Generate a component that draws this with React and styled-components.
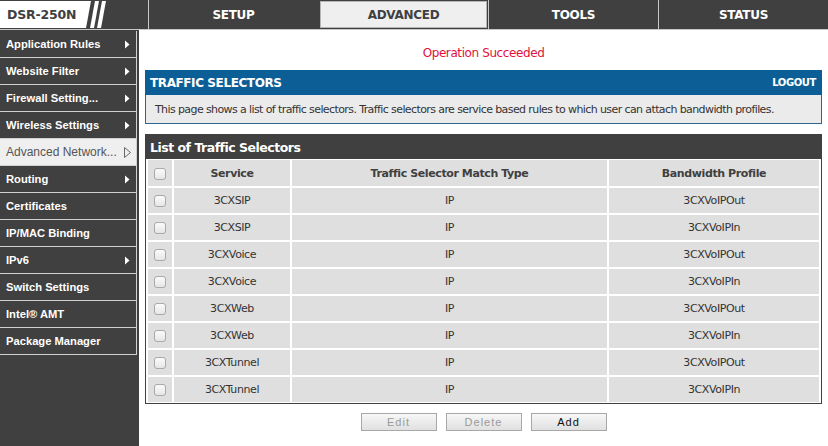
import React from "react";
import styled, { createGlobalStyle } from "styled-components";

const Global = createGlobalStyle`
  html, body { margin: 0; padding: 0; background: #fff; }
  body { font-family: "DejaVu Sans", Tahoma, sans-serif; }
  * { box-sizing: border-box; }
`;

const Page = styled.div`
  width: 828px;
  height: 446px;
  display: flex;
  flex-direction: column;
  overflow: hidden;
`;

const TopBar = styled.div`
  height: 30px;
  background: #404040;
  border-bottom: 1px solid #c8c8c8;
  display: flex;
  flex-shrink: 0;
`;

const Logo = styled.div`
  width: 148px;
  position: relative;
  display: flex;
  align-items: center;
`;

const LogoShape = styled.svg`
  position: absolute;
  left: 0;
  top: 0;
`;

const LogoText = styled.span`
  position: relative;
  padding-left: 7px;
  font-family: "DejaVu Sans", Tahoma, sans-serif;
  font-weight: bold;
  font-size: 12.5px;
  letter-spacing: -0.2px;
  color: #404040;
`;

const Nav = styled.div`
  flex: 1;
  display: grid;
  grid-template-columns: repeat(4, 1fr);
`;

const Tab = styled.div`
  border-left: 1px solid #c8c8c8;
  display: flex;
  align-items: center;
  justify-content: center;
  font-family: "DejaVu Sans", Tahoma, sans-serif;
  font-weight: bold;
  font-size: 12px;
  letter-spacing: -0.3px;
  color: ${(p) => (p.$active ? "#404040" : "#fff")};
  background: ${(p) => (p.$active ? "#efefef" : "transparent")};
  box-shadow: ${(p) => (p.$active ? "inset 0 0 0 1px #b5b5b5" : "none")};
  ${(p) => p.$active && "border: 1px solid #404040; border-left: 2px solid #404040;"}
`;

const Body = styled.div`
  flex: 1;
  display: flex;
  min-height: 0;
`;

const Sidebar = styled.div`
  width: 139px;
  background: #404040;
  padding-top: 1px;
  flex-shrink: 0;
`;

const MenuItem = styled.div`
  width: 137px;
  height: 27px;
  border-right: 1px solid #d0d0d0;
  border-bottom: 1px solid #d0d0d0;
  display: flex;
  align-items: center;
  justify-content: space-between;
  padding: 0 5px 0 6px;
  font-family: "Liberation Sans", Arial, sans-serif;
  font-size: ${(p) => (p.$active ? "12px" : "11.2px")};
  font-weight: ${(p) => (p.$active ? "normal" : "bold")};
  color: ${(p) => (p.$active ? "#555" : "#fff")};
  background: ${(p) => (p.$active ? "#efefef" : "#404040")};
  white-space: nowrap;
`;

const Arrow = styled.svg`
  flex-shrink: 0;
`;

const Main = styled.div`
  flex: 1;
  padding: 0 6px 0 6px;
  display: flex;
  flex-direction: column;
`;

const Message = styled.div`
  height: 40px;
  display: flex;
  align-items: center;
  justify-content: center;
  padding-top: 6px;
  color: #e0103a;
  font-size: 12px;
  letter-spacing: -0.4px;
`;

const BlueHeader = styled.div`
  height: 25px;
  background: #0c5f96;
  display: flex;
  align-items: center;
  justify-content: space-between;
  padding: 0 6px 0 5px;
  color: #fff;
  font-weight: bold;
`;

const HeaderTitle = styled.span`
  font-size: 12px;
  letter-spacing: -0.4px;
`;

const Logout = styled.span`
  font-size: 10px;
  letter-spacing: -0.4px;
`;

const Desc = styled.div`
  height: 29px;
  background: #ebebeb;
  border: 1px solid #2d6690;
  border-top: none;
  display: flex;
  align-items: center;
  padding-left: 9px;
  font-size: 11px;
  letter-spacing: -0.6px;
  color: #333;
`;

const ListBox = styled.div`
  margin-top: 10px;
  border: 1px solid #404040;
`;

const ListHeader = styled.div`
  height: 24px;
  background: #404040;
  display: flex;
  align-items: center;
  padding-left: 4px;
  color: #fff;
  font-weight: bold;
  font-size: 12.5px;
  letter-spacing: -0.5px;
`;

const Table = styled.table`
  width: 100%;
  border-collapse: separate;
  border-spacing: 2px 2px;
  margin: -1px 0 -1px;
  font-size: 11px;
  letter-spacing: -0.4px;
  color: #333;
`;

const Th = styled.th`
  height: 26px;
  background: #dfdfdf;
  font-weight: bold;
  color: #404040;
  text-align: center;
  padding: 0;
  width: ${(p) => p.$w || "auto"};
`;

const Td = styled.td`
  height: 25px;
  background: #dfdfdf;
  text-align: center;
  padding: 0;
`;

const Check = styled.span`
  display: inline-block;
  width: 12px;
  height: 12px;
  border: 1px solid #a9a9a9;
  border-radius: 3px;
  background: linear-gradient(#fbfbfb, #e6e6e6);
  vertical-align: middle;
`;

const Buttons = styled.div`
  display: flex;
  justify-content: center;
  gap: 9px;
  margin-top: 9px;
`;

const Button = styled.button`
  width: 76px;
  height: 18px;
  border: 1px solid #a8a8a8;
  background: linear-gradient(#f7f7f7, #e0e0e0);
  font-family: "Liberation Sans", Arial, sans-serif;
  font-size: 11px;
  letter-spacing: 1px;
  color: ${(p) => (p.disabled ? "#9a9a9a" : "#111")};
  padding: 0;
`;

const menu = [
  ["Application Rules", true],
  ["Website Filter", true],
  ["Firewall Setting...", true],
  ["Wireless Settings", true],
  ["Advanced Network...", true, true],
  ["Routing", true],
  ["Certificates", false],
  ["IP/MAC Binding", false],
  ["IPv6", true],
  ["Switch Settings", false],
  ["Intel® AMT", false],
  ["Package Manager", false],
];

const rows = [
  ["3CXSIP", "IP", "3CXVoIPOut"],
  ["3CXSIP", "IP", "3CXVoIPIn"],
  ["3CXVoice", "IP", "3CXVoIPOut"],
  ["3CXVoice", "IP", "3CXVoIPIn"],
  ["3CXWeb", "IP", "3CXVoIPOut"],
  ["3CXWeb", "IP", "3CXVoIPIn"],
  ["3CXTunnel", "IP", "3CXVoIPOut"],
  ["3CXTunnel", "IP", "3CXVoIPIn"],
];

export default function App() {
  return (
    <>
      <Global />
      <Page>
        <TopBar>
          <Logo>
            <LogoShape width="148" height="29" viewBox="0 0 148 29">
              <polygon points="0,1 91,1 86,28 0,28" fill="#fff" />
              <polygon points="95,1 99,1 94,28 90,28" fill="#fff" />
              <polygon points="102,1 106,1 101,28 97,28" fill="#fff" />
            </LogoShape>
            <LogoText>DSR-250N</LogoText>
          </Logo>
          <Nav>
            <Tab>SETUP</Tab>
            <Tab $active>ADVANCED</Tab>
            <Tab>TOOLS</Tab>
            <Tab>STATUS</Tab>
          </Nav>
        </TopBar>
        <Body>
          <Sidebar>
            {menu.map(([label, arrow, active]) => (
              <MenuItem key={label} $active={active}>
                <span>{label}</span>
                {arrow && (
                  <Arrow width="7" height="11" viewBox="0 0 7 11">
                    {active ? (
                      <polygon points="0.5,0.5 6.5,5.5 0.5,10.5" fill="none" stroke="#666" strokeWidth="1" />
                    ) : (
                      <polygon points="1,1.5 5.5,5.5 1,9.5" fill="#fff" />
                    )}
                  </Arrow>
                )}
              </MenuItem>
            ))}
          </Sidebar>
          <Main>
            <Message>Operation Succeeded</Message>
            <BlueHeader>
              <HeaderTitle>TRAFFIC SELECTORS</HeaderTitle>
              <Logout>LOGOUT</Logout>
            </BlueHeader>
            <Desc>
              This page shows a list of traffic selectors. Traffic selectors are service based rules to which user can attach bandwidth profiles.
            </Desc>
            <ListBox>
              <ListHeader>List of Traffic Selectors</ListHeader>
              <Table>
                <thead>
                  <tr>
                    <Th $w="24px"><Check /></Th>
                    <Th $w="116px">Service</Th>
                    <Th $w="315px">Traffic Selector Match Type</Th>
                    <Th>Bandwidth Profile</Th>
                  </tr>
                </thead>
                <tbody>
                  {rows.map((r, i) => (
                    <tr key={i}>
                      <Td><Check /></Td>
                      <Td>{r[0]}</Td>
                      <Td>{r[1]}</Td>
                      <Td>{r[2]}</Td>
                    </tr>
                  ))}
                </tbody>
              </Table>
            </ListBox>
            <Buttons>
              <Button disabled>Edit</Button>
              <Button disabled>Delete</Button>
              <Button>Add</Button>
            </Buttons>
          </Main>
        </Body>
      </Page>
    </>
  );
}
